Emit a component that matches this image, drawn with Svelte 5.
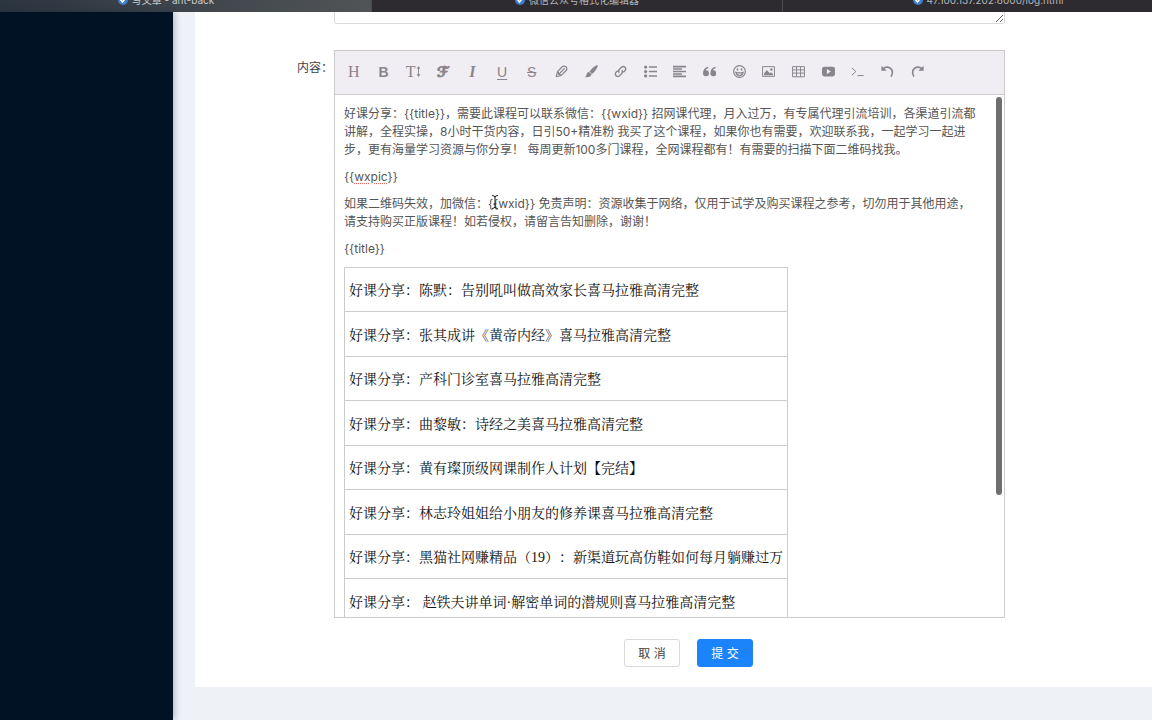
<script>
    const tabs = [
        { title: "写文章 - ant-back", active: true },
        { title: "微信公众号格式化编辑器", active: false },
        { title: "47.100.137.202:8000/log.html", active: false },
    ];

    const tools = [
        { name: "标题", glyph: "H", kind: "serif" },
        { name: "粗体", glyph: "B", kind: "bold" },
        { name: "字号", glyph: "T", kind: "serif", icon: "size" },
        { name: "字体", glyph: "ℱ", kind: "script" },
        { name: "斜体", glyph: "I", kind: "italic" },
        { name: "下划线", glyph: "U", kind: "under" },
        { name: "删除线", glyph: "S", kind: "strike" },
        { name: "文字颜色", icon: "pencil" },
        { name: "背景颜色", icon: "brush" },
        { name: "链接", icon: "link" },
        { name: "列表", icon: "list" },
        { name: "对齐", icon: "align" },
        { name: "引用", icon: "quote" },
        { name: "表情", icon: "smile" },
        { name: "图片", icon: "image" },
        { name: "表格", icon: "table" },
        { name: "视频", icon: "video" },
        { name: "代码", icon: "code" },
        { name: "撤销", icon: "undo" },
        { name: "重复", icon: "redo" },
    ];

    const intro = [
        "好课分享：{{title}}，需要此课程可以联系微信：{{wxid}} 招网课代理，月入过万，有专属代理引流培训，各渠道引流都",
        "讲解，全程实操，8小时干货内容，日引50+精准粉 我买了这个课程，如果你也有需要，欢迎联系我，一起学习一起进",
        "步，更有海量学习资源与你分享！ 每周更新100多门课程，全网课程都有！有需要的扫描下面二维码找我。",
    ];

    const notice = [
        "如果二维码失效，加微信：{{wxid}} 免责声明：资源收集于网络，仅用于试学及购买课程之参考，切勿用于其他用途，",
        "请支持购买正版课程！如若侵权，请留言告知删除，谢谢！",
    ];

    const courses = [
        "好课分享：陈默：告别吼叫做高效家长喜马拉雅高清完整",
        "好课分享：张其成讲《黄帝内经》喜马拉雅高清完整",
        "好课分享：产科门诊室喜马拉雅高清完整",
        "好课分享：曲黎敏：诗经之美喜马拉雅高清完整",
        "好课分享：黄有璨顶级网课制作人计划【完结】",
        "好课分享：林志玲姐姐给小朋友的修养课喜马拉雅高清完整",
        "好课分享：黑猫社网赚精品（19）：新渠道玩高仿鞋如何每月躺赚过万",
        "好课分享： 赵铁夫讲单词·解密单词的潜规则喜马拉雅高清完整",
    ];
</script>

<div class="page">
    <header class="tabbar">
        <nav class="tabs">
            {#each tabs as tab}
                <a class="tab" class:active={tab.active} href="#tab">
                    <svg width="10" height="10" viewBox="0 0 10 10" aria-hidden="true">
                        <circle cx="5" cy="5" r="5" fill="#3f7fcb" />
                        <path d="M2.5 4.5 4.5 7 8 2.5" fill="none" stroke="#fff" stroke-width="1.6" />
                    </svg>
                    <span>{tab.title}</span>
                </a>
            {/each}
        </nav>
    </header>

    <div class="layout">
        <aside class="sidebar"></aside>

        <main>
            <form class="card">
                <div class="row">
                    <textarea class="summary" aria-label="摘要"></textarea>
                </div>

                <div class="row editor-row">
                    <label id="content-label" for="content">内容：</label>
                    <div class="editor">
                        <div class="toolbar">
                            {#each tools as tool}
                                <button type="button" class="tool" aria-label={tool.name}>
                                    {#if tool.glyph}
                                        <span class={tool.kind}>{tool.glyph}</span>
                                    {/if}
                                    {#if tool.icon === "size"}
                                        <svg class="narrow" viewBox="0 0 5 14">
                                            <path d="M2.5 3v8" stroke="currentColor" />
                                            <path d="M0.5 4 2.5 1l2 3zM0.5 10l2 3 2-3z" fill="currentColor" />
                                        </svg>
                                    {:else if tool.icon}
                                        <svg viewBox="0 0 16 16" fill="none" stroke="currentColor" stroke-width="1.5">
                                            {#if tool.icon === "pencil"}
                                                <path d="M1.500 14.500 3 8.500 8.500 2.500q2-1.500 3.500-1M1.500 14.500l6-1.500L14 6.500q1.500-2-.5-4.500l-1.500-.5M4.500 11.500 12 4M3 8.500q1.500 0 1.500 3 3 0 3 1.500" />
                                            {:else if tool.icon === "brush"}
                                                <path d="M15.500.5Q17 2 10.500 9.500L8.500 11 5.500 8 7 6Q13.500-.5 15.500.5zM5 8.500 8 11.500Q7.500 15.500 0 15 2 13.500 2 11.500 2.500 8.500 5 8.500z" fill="currentColor" stroke="none" />
                                            {:else if tool.icon === "link"}
                                                <path d="M6.500 9.500a3 3 0 0 1 0-4l3-3a3 3 0 0 1 4.200 4.200L11.500 9M9.500 6.500a3 3 0 0 1 0 4l-3 3a3 3 0 0 1-4.200-4.200L4.500 7" stroke-width="1.700" />
                                            {:else if tool.icon === "list"}
                                                <path d="M6 2.500h10M6 8h10M6 13.500h10" stroke-width="2" />
                                                <g fill="currentColor" stroke="none">
                                                    <circle cx="2" cy="2.500" r="2" />
                                                    <circle cx="2" cy="8" r="2" />
                                                    <circle cx="2" cy="13.500" r="2" />
                                                </g>
                                            {:else if tool.icon === "align"}
                                                <path d="M0 2h16M0 5h11M0 8h16M0 11h11M0 14h16" stroke-width="1.900" />
                                            {:else if tool.icon === "quote"}
                                                <path d="M3.700 6.500A3.700 3.700 0 1 1 0 10.500Q0 3 6.500 2v2Q3.700 4.500 3.200 6.600zM12.700 6.500A3.700 3.700 0 1 1 9 10.500Q9 3 15.500 2v2Q12.700 4.500 12.200 6.600z" fill="currentColor" stroke="none" />
                                            {:else if tool.icon === "smile"}
                                                <circle cx="8" cy="8" r="7.200" />
                                                <path d="M3.500 9q4.500 1.500 9 0-1 4-4.500 4T3.500 9z" />
                                                <g fill="currentColor" stroke="none">
                                                    <ellipse cx="5.500" cy="5.500" rx="1" ry="1.500" />
                                                    <ellipse cx="10.500" cy="5.500" rx="1" ry="1.500" />
                                                </g>
                                            {:else if tool.icon === "image"}
                                                <path d="M.7 2h14.600v12H.7z" stroke-width="1.200" />
                                                <path d="M2.500 12.500v-2L6 6l3.500 4L11 9l2.500 2v1.500z" fill="currentColor" stroke="none" />
                                                <circle cx="11.500" cy="5.500" r="1.500" fill="currentColor" stroke="none" />
                                            {:else if tool.icon === "table"}
                                                <path d="M.7 2h14.600v12.500H.7zM.7 6h14.600M.7 10h14.600M5.500 2v12.500M10.500 2v12.500" stroke-width="1.200" />
                                            {:else if tool.icon === "video"}
                                                <path d="M3 2h10q3 0 3 3v6q0 3-3 3H3q-3 0-3-3V5q0-3 3-3zM6 5v6l5-3z" fill="currentColor" fill-rule="evenodd" stroke="none" />
                                            {:else if tool.icon === "code"}
                                                <path d="m1 3.500 5 4.500-5 4.500M8 13h7.500" stroke-width="1.200" />
                                            {:else if tool.icon === "undo"}
                                                <path d="M2.500 4.500Q7 1 11.500 4t1 10.500" stroke-width="2" />
                                                <path d="M.5 1v6H7z" fill="currentColor" stroke="none" />
                                            {:else if tool.icon === "redo"}
                                                <path d="M13.500 4.500Q9 1 4.500 4t-1 10.500" stroke-width="2" />
                                                <path d="M15.500 1v6H9z" fill="currentColor" stroke="none" />
                                            {/if}
                                        </svg>
                                    {/if}
                                </button>
                            {/each}
                        </div>

                        <div
                            id="content"
                            class="content"
                            contenteditable="true"
                            role="textbox"
                            tabindex="0"
                            aria-labelledby="content-label"
                            spellcheck="false"
                        >
                            <p>
                                {#each intro as line}{line}<br />{/each}
                            </p>
                            <p>{"{{"}<span class="misspelled">wxpic</span>{"}}"}</p>
                            <p>
                                {#each notice as line}{line}<br />{/each}
                            </p>
                            <p>{"{{title}}"}</p>
                            <table>
                                <tbody>
                                    {#each courses as course}
                                        <tr><td>{course}</td></tr>
                                    {/each}
                                </tbody>
                            </table>
                        </div>

                        <div class="thumb"></div>
                        <svg class="caret" viewBox="0 0 8 14" aria-hidden="true">
                            <path d="M1 .5q3 0 3 2 0-2 3-2M4 2.500v9M1 13.500q3 0 3-2 0 2 3 2M2.500 9h3" fill="none" stroke="#222" />
                        </svg>
                    </div>
                </div>

                <div class="actions">
                    <button type="button" class="btn">取 消</button>
                    <button type="button" class="btn primary">提 交</button>
                </div>
            </form>
        </main>
    </div>
</div>

<style>
    :global(body) {
        background: #eef1f5;
    }

    .page {
        display: flex;
        flex-direction: column;
        height: 100vh;
        overflow: hidden;
        font-family: Inter, "Noto Sans CJK SC", sans-serif;
        font-size: 12px;
        color: #555;
        text-spacing-trim: space-all;
    }

    /* browser tabs, scrolled partly out of view */
    .tabbar {
        flex: none;
        height: 12px;
        overflow: hidden;
        background: #2d2b30;
        display: flex;
        align-items: flex-end;
    }

    .tabs {
        flex: 1;
        display: grid;
        grid-template-columns: repeat(3, 1fr);
        margin: 0 -42px 0 -39px;
    }

    .tab {
        display: flex;
        justify-content: center;
        align-items: center;
        gap: 4px;
        height: 24px;
        box-sizing: border-box;
        font-size: 10px;
        line-height: 14px;
        color: #b5b5b8;
        text-decoration: none;
        border-right: 1px solid #4c4b4f;
    }

    .tab.active {
        background: linear-gradient(90deg, #27323e, #515456);
        color: #c8cacc;
    }

    .tab svg {
        flex: none;
    }

    .layout {
        flex: 1;
        display: flex;
        min-height: 0;
    }

    .sidebar {
        flex: none;
        width: 173px;
        background: #001224;
        box-shadow: 1px 0 7px rgba(0, 21, 60, 0.3);
    }

    main {
        flex: 1;
        min-width: 0;
        padding-left: 22px;
    }

    .card {
        background: #fff;
        padding: 0 147px 20px 139px;
    }

    .summary {
        display: block;
        width: 100%;
        height: 12px;
        box-sizing: border-box;
        border: 1px solid #d9d9d9;
        border-top: none;
        border-radius: 0 0 3px 3px;
        background: #fff;
        resize: vertical;
        outline: none;
    }

    .editor-row {
        position: relative;
        margin-top: 26px;
    }

    .editor-row label {
        position: absolute;
        right: 100%;
        top: 8px;
        padding-right: 1px;
        line-height: 20px;
        white-space: nowrap;
        color: #444;
    }

    .editor {
        position: relative;
        border: 1px solid #ccc;
    }

    .toolbar {
        display: grid;
        grid-template-columns: repeat(20, minmax(0, 1fr));
        height: 43px;
        padding: 0 72px 0 4px;
        background: #f0edf3;
        border-bottom: 1px solid #ccc;
    }

    .tool {
        display: flex;
        align-items: center;
        justify-content: center;
        padding: 0 0 2px;
        border: none;
        background: none;
        color: #88868c;
        font-size: 14px;
        line-height: 16px;
    }

    .tool svg {
        flex: none;
        width: 13px;
        height: 13px;
    }

    .tool svg.narrow {
        width: 5px;
    }

    .serif {
        font-family: "Liberation Serif", serif;
        font-size: 16px;
    }

    .bold {
        font-family: "Liberation Sans", sans-serif;
        font-weight: bold;
    }

    .script {
        font-family: "DejaVu Sans", sans-serif;
        font-weight: bold;
        -webkit-text-stroke: 1px currentColor;
    }

    .italic {
        font-family: "Liberation Serif", serif;
        font-size: 16px;
        font-style: italic;
        font-weight: bold;
    }

    .under {
        font-family: "Liberation Sans", sans-serif;
        text-decoration: underline;
        text-underline-offset: 2px;
    }

    .strike {
        font-family: "Liberation Sans", sans-serif;
        text-decoration: line-through;
    }

    .content {
        height: 522px;
        box-sizing: border-box;
        padding: 10px 9px 0;
        overflow: hidden;
        outline: none;
        line-height: 18px;
    }

    .content p {
        margin: 0 0 9px;
        white-space: nowrap;
    }

    .misspelled {
        text-decoration: underline dotted #e06666;
        text-underline-offset: 2px;
    }

    table {
        border-collapse: collapse;
        font-family: "Liberation Serif", "Noto Serif CJK SC", "Noto Sans CJK SC", serif;
        font-size: 14px;
        color: #111;
    }

    td {
        height: 44px;
        box-sizing: border-box;
        padding: 3px 4px 0;
        border: 1px solid #ccc;
        white-space: nowrap;
    }

    tr:nth-child(even) td {
        height: 45px;
    }

    .thumb {
        position: absolute;
        top: 46px;
        right: 2px;
        width: 6px;
        height: 398px;
        border-radius: 3px;
        background: #6f6f70;
    }

    .caret {
        position: absolute;
        top: 144px;
        left: 156px;
        width: 8px;
        height: 14px;
    }

    .actions {
        display: flex;
        gap: 17px;
        margin-top: 21px;
        padding-left: 290px;
    }

    .btn {
        width: 56px;
        height: 28px;
        padding: 0 0 2px;
        border: 1px solid #d9d9d9;
        border-radius: 3px;
        background: #fff;
        font-family: inherit;
        font-size: 12px;
        color: #444;
    }

    .btn.primary {
        border-color: #1b84fb;
        background: #1b84fb;
        color: #fff;
    }
</style>
